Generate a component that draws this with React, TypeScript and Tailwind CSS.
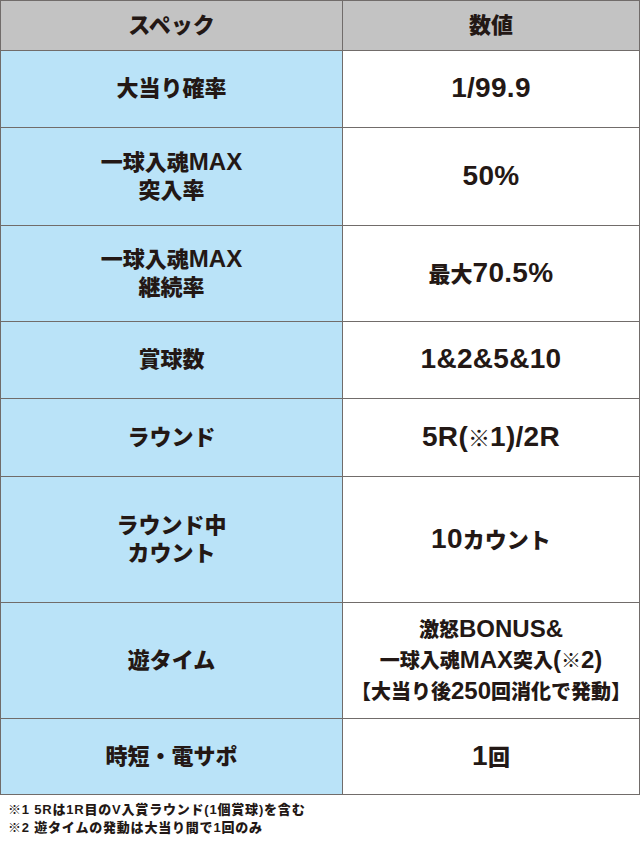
import React from 'react';

type Row = {
  label: string[];
  value: string[];
  h: string;
  small?: boolean;
};

const rows: Row[] = [
  { label: ['大当り確率'], value: ['1/99.9'], h: 'h-[77px]' },
  { label: ['一球入魂MAX', '突入率'], value: ['50%'], h: 'h-[98px]' },
  { label: ['一球入魂MAX', '継続率'], value: ['最大70.5%'], h: 'h-[96px]' },
  { label: ['賞球数'], value: ['1&2&5&10'], h: 'h-[77px]' },
  { label: ['ラウンド'], value: ['5R(※1)/2R'], h: 'h-[78px]' },
  { label: ['ラウンド中', 'カウント'], value: ['10カウント'], h: 'h-[126px]' },
  {
    label: ['遊タイム'],
    value: ['激怒BONUS&', '一球入魂MAX突入(※2)', '【大当り後250回消化で発動】'],
    h: 'h-[116px]',
    small: true,
  },
  { label: ['時短・電サポ'], value: ['1回'], h: 'h-[76px]' },
];

// split a line so ascii runs can get their own (bigger) size
function Mixed({ text, latin }: { text: string; latin: string }) {
  const parts = text.match(/[\x20-\x7e]+|[^\x20-\x7e]+/g) || [];
  return (
    <>
      {parts.map((p, i) =>
        /^[\x20-\x7e]+$/.test(p) ? (
          <span key={i} className={latin}>
            {p}
          </span>
        ) : (
          <span key={i}>{p}</span>
        )
      )}
    </>
  );
}

export default function App() {
  return (
    <div
      className="w-[640px] bg-white text-[#231815] font-black"
      style={{ fontFamily: '"Liberation Sans", "Noto Sans CJK JP", sans-serif' }}
    >
      <div className="border-t border-l border-r border-[#716c6a]">
        {/* header */}
        <div className="flex h-[50px] border-b border-[#716c6a] bg-[#c3c3c3] text-[22px]">
          <div className="w-[342px] border-r border-[#716c6a] flex items-center justify-center">
            スペック
          </div>
          <div className="flex-1 flex items-center justify-center">数値</div>
        </div>

        {rows.map((r, i) => (
          <div key={i} className={`flex border-b border-[#716c6a] ${r.h}`}>
            <div className="w-[342px] border-r border-[#716c6a] bg-[#bae3f8] flex flex-col items-center justify-center text-[22px] leading-[28px]">
              {r.label.map((l, j) => (
                <div key={j}>
                  <Mixed text={l} latin="text-[24px]" />
                </div>
              ))}
            </div>
            <div
              className={`flex-1 flex flex-col items-center justify-center ${
                r.small ? 'text-[20px] leading-[30px]' : 'text-[22px] leading-[30px]'
              }`}
            >
              {r.value.map((v, j) => (
                <div key={j} className="whitespace-nowrap">
                  <Mixed
                    text={v}
                    latin={r.small ? 'text-[24px]' : 'text-[28px] tracking-[0.3px]'}
                  />
                </div>
              ))}
            </div>
          </div>
        ))}
      </div>

      {/* notes */}
      <div className="pt-[6px] pl-[8px] text-[13px] leading-[18px] tracking-[0.8px]">
        <div>※1 5Rは1R目のV入賞ラウンド(1個賞球)を含む</div>
        <div>※2 遊タイムの発動は大当り間で1回のみ</div>
      </div>
    </div>
  );
}
